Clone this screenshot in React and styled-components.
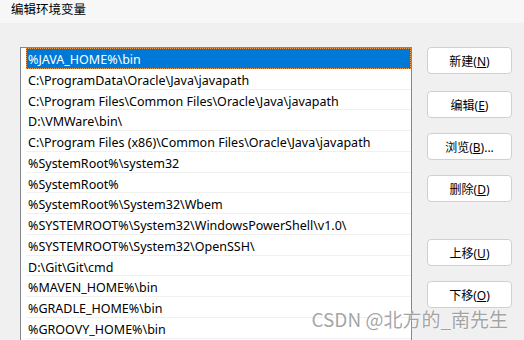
import React from 'react'
import styled, { createGlobalStyle } from 'styled-components'

const GlobalStyle = createGlobalStyle`
  html, body {
    margin: 0;
    padding: 0;
    background: #f0f0f0;
  }
  body {
    font-family: "Noto Sans", "Noto Sans CJK SC", sans-serif;
  }
`

const paths = [
  '%JAVA_HOME%\\bin',
  'C:\\ProgramData\\Oracle\\Java\\javapath',
  'C:\\Program Files\\Common Files\\Oracle\\Java\\javapath',
  'D:\\VMWare\\bin\\',
  'C:\\Program Files (x86)\\Common Files\\Oracle\\Java\\javapath',
  '%SystemRoot%\\system32',
  '%SystemRoot%',
  '%SystemRoot%\\System32\\Wbem',
  '%SYSTEMROOT%\\System32\\WindowsPowerShell\\v1.0\\',
  '%SYSTEMROOT%\\System32\\OpenSSH\\',
  'D:\\Git\\Git\\cmd',
  '%MAVEN_HOME%\\bin',
  '%GRADLE_HOME%\\bin',
  '%GROOVY_HOME%\\bin',
]

const buttons = [
  { label: '新建', key: 'N', gap: 0 },
  { label: '编辑', key: 'E', gap: 17 },
  { label: '浏览', key: 'B', gap: 15, more: true },
  { label: '删除', key: 'D', gap: 15 },
  { label: '上移', key: 'U', gap: 37 },
  { label: '下移', key: 'O', gap: 15 },
]

const App = () => {
  return (
    <>
      <GlobalStyle />
      <Window>
        <TitleBar>编辑环境变量</TitleBar>
        <Body>
          <ListBox>
            {paths.map((p, i) => (
              <Row key={p} selected={i === 0}>{p}</Row>
            ))}
          </ListBox>
          <ButtonColumn>
            {buttons.map((b) => (
              <Button key={b.key} gap={b.gap}>
                {b.label}(<u>{b.key}</u>){b.more ? '...' : ''}
              </Button>
            ))}
          </ButtonColumn>
        </Body>
        <Watermark>CSDN @北方的_南先生</Watermark>
      </Window>
    </>
  )
}

export default App

const Window = styled.div`
  position: relative;
  width: 524px;
  height: 340px;
  overflow: hidden;
  background: #f0f0f0;
  display: flex;
  flex-direction: column;
`
const TitleBar = styled.div`
  flex-shrink: 0;
  height: 23px;
  box-sizing: border-box;
  padding: 1px 0 0 11px;
  background: #f7f7f7;
  font-family: "Noto Sans CJK SC", sans-serif;
  font-size: 12.5px;
  line-height: 16px;
  color: #000000;
`
const Body = styled.div`
  flex-shrink: 0;
  display: flex;
  align-items: flex-start;
  padding: 24px 0 0 20px;
  gap: 15px;
`
const ListBox = styled.div`
  width: 385px;
  height: 300px;
  border: 1px solid #828790;
  border-bottom: none;
  padding-left: 5px;
  background: #ffffff;
  flex-shrink: 0;
`
const Row = styled.div`
  height: 20.77px;
  box-sizing: border-box;
  padding: 3px 0 0 2px;
  font-size: 12.5px;
  line-height: 17px;
  white-space: nowrap;
  color: ${(p) => (p.selected ? '#ffffff' : '#000000')};
  background: ${(p) => (p.selected ? '#0078d7' : 'transparent')};
  border-bottom: 1px solid ${(p) => (p.selected ? '#0078d7' : '#f0f0f0')};
  outline: ${(p) => (p.selected ? '1px dotted #f0a050' : 'none')};
  outline-offset: -1px;
`
const ButtonColumn = styled.div`
  display: flex;
  flex-direction: column;
`
const Button = styled.button`
  width: 85px;
  height: 27px;
  margin-top: ${(p) => p.gap}px;
  padding: 0;
  background: #ffffff;
  border: 1px solid #d0d0d0;
  border-radius: 4px;
  font-family: "Noto Sans", "Noto Sans CJK SC", sans-serif;
  font-size: 12px;
  color: #000000;
  u {
    text-decoration-thickness: 1px;
  }
`
const Watermark = styled.div`
  position: absolute;
  right: 16px;
  bottom: 8px;
  font-family: "Noto Sans CJK SC", sans-serif;
  font-size: 19px;
  line-height: 26px;
  color: rgba(125, 125, 125, 0.7);
  text-shadow: 0 0 2px #ffffff;
  white-space: nowrap;
`
